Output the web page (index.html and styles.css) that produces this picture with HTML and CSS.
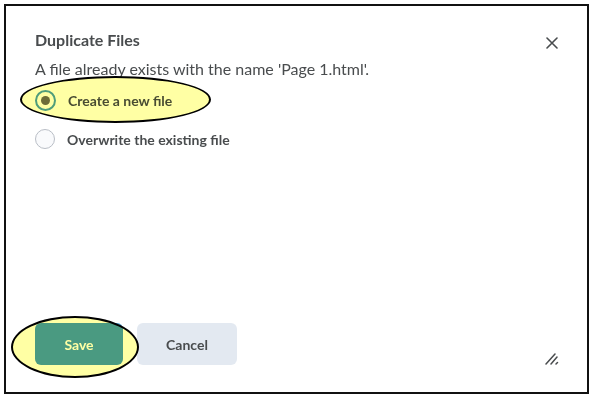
FILE: index.html
```html
<!DOCTYPE html>
<html>
<head>
<meta charset="utf-8">
<link rel="stylesheet" href="styles.css">
</head>
<body>
<div class="frame">
  <div class="dialog">
    <div class="header">
      <h2 class="title">Duplicate Files</h2>
      <span class="close" aria-label="Close">
        <svg width="12" height="12" viewBox="0 0 12 12"><path d="M1 1L11 11M11 1L1 11" stroke="#494c4e" stroke-width="1.6" stroke-linecap="round"/></svg>
      </span>
    </div>
    <p class="message">A file already exists with the name 'Page 1.html'.</p>
    <div class="options">
      <label class="option"><span class="radio checked"><span class="dot"></span></span><span class="label">Create a new file</span></label>
      <label class="option"><span class="radio"></span><span class="label">Overwrite the existing file</span></label>
    </div>
    <div class="spacer"></div>
    <div class="footer">
      <button class="btn primary">Save</button>
      <button class="btn secondary">Cancel</button>
      <span class="resize">
        <svg width="14" height="13" viewBox="0 0 14 13"><path d="M1 12L10 2M6 12L12 5M11 12L12.5 10.5" stroke="#494c4e" stroke-width="1.5" stroke-linecap="round"/></svg>
      </span>
    </div>
  </div>
  <div class="mark mark-radio"></div>
  <div class="mark mark-save"></div>
</div>
</body>
</html>
```
FILE: styles.css
```css
html, body {
  margin: 0;
  padding: 0;
  background: #ffffff;
}
body {
  font-family: Lato, "Open Sans", Arial, sans-serif;
  color: #494c4e;
}
.frame {
  position: relative;
  margin: 4px 0 0 4px;
  width: 581px;
  height: 386px;
  border: 2px solid #111;
  background: #fff;
  isolation: isolate;
}
.dialog {
  display: flex;
  flex-direction: column;
  height: 100%;
  box-sizing: border-box;
  padding: 24px 28px 27px 29px;
}
.header {
  display: flex;
  align-items: flex-start;
  justify-content: space-between;
}
.title {
  margin: 0;
  font-size: 16px;
  font-weight: 700;
  line-height: 20px;
}
.close {
  display: flex;
  margin-top: 7px;
  margin-right: 1px;
}
.message {
  margin: 8px 0 0 0;
  font-size: 16px;
  line-height: 22px;
}
.options {
  display: flex;
  flex-direction: column;
  gap: 18px;
  margin-top: 10px;
}
.option {
  display: flex;
  align-items: center;
  gap: 12px;
}
.radio {
  width: 18px;
  height: 18px;
  border: 1.5px solid #b9bec6;
  border-radius: 50%;
  background: #f9fafc;
  display: flex;
  align-items: center;
  justify-content: center;
  flex: none;
}
.radio.checked {
  border: 2px solid #4f9dbe;
  background: #fff;
  width: 17px;
  height: 17px;
}
.dot {
  width: 9px;
  height: 9px;
  border-radius: 50%;
  background: #6d6d55;
}
.label {
  font-size: 14px;
  font-weight: 700;
}
.spacer {
  flex: 1;
}
.footer {
  display: flex;
  align-items: center;
  gap: 14px;
}
.btn {
  font-family: inherit;
  font-size: 14px;
  font-weight: 700;
  height: 42px;
  border: none;
  border-radius: 6px;
}
.primary {
  width: 88px;
  background: #4a9ac9;
  color: #fff;
}
.secondary {
  width: 100px;
  background: #e3e9f1;
  color: #494c4e;
}
.resize {
  display: flex;
  align-self: flex-end;
  margin-left: auto;
}
.mark {
  position: absolute;
  box-sizing: border-box;
  border: 2px solid #000;
  border-radius: 50%;
  background: #ffffa4;
  mix-blend-mode: multiply;
}
.mark-radio {
  left: 14px;
  top: 70px;
  width: 191px;
  height: 47px;
}
.mark-save {
  left: 5px;
  top: 310px;
  width: 128px;
  height: 62px;
}
```
